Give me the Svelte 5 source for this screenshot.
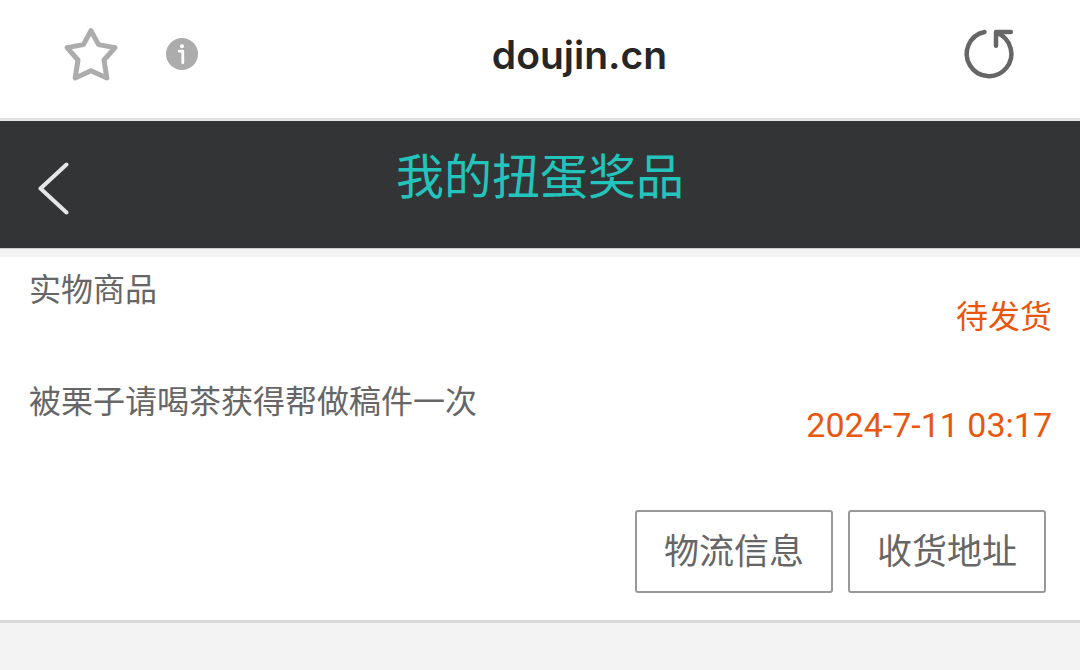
<script>
  const site = 'doujin.cn';
  const prize = {
    kind: '实物商品',
    detail: '被栗子请喝茶获得帮做稿件一次',
    status: '待发货',
    time: '2024-7-11 03:17'
  };
  const actions = ['物流信息', '收货地址'];
</script>

<div class="browser-bar">
  <div class="tools">
    <button class="icon" aria-label="收藏">
      <svg width="56" height="56" viewBox="0 0 56 56" fill="none" stroke="#acacac" stroke-width="5" stroke-linejoin="round">
        <path d="M28 4.6 35.5 18.6 52 21.6 41 34 43.8 52 28 44.8 12.2 52 15 34 4 21.6 20.5 18.6Z" />
      </svg>
    </button>
    <button class="icon" aria-label="网站信息">
      <svg width="32" height="32" viewBox="0 0 32 32">
        <circle cx="16" cy="16" r="16" fill="#acacac" />
        <circle cx="16" cy="8.3" r="2" fill="#fff" />
        <path d="M13.2 13.2H16.8V24.8" fill="none" stroke="#fff" stroke-width="2.8" stroke-linecap="round" stroke-linejoin="round" />
      </svg>
    </button>
  </div>
  <div class="site">{site}</div>
  <button class="icon" aria-label="刷新">
    <svg width="56" height="56" viewBox="0 0 56 56" fill="none" stroke="#666" stroke-width="4.5" stroke-linecap="round" stroke-linejoin="round">
      <path d="M23.5 6A22.3 22.3 0 1 0 36 7" />
      <path d="M35 19.8V6H49.8" />
    </svg>
  </button>
</div>

<header>
  <a class="back" href="#back" aria-label="返回">
    <svg width="32" height="54" viewBox="0 0 32 54" fill="none" stroke="#e6e6e6" stroke-width="4" stroke-linecap="round" stroke-linejoin="round">
      <path d="M29.5 2.5 3.5 26.5 29.5 50.5" />
    </svg>
  </a>
  <h1>我的扭蛋奖品</h1>
</header>

<main>
  <article>
    <div class="summary">
      <div class="info">
        <p>{prize.kind}</p>
        <p>{prize.detail}</p>
      </div>
      <div class="state">
        <p>{prize.status}</p>
        <time>{prize.time}</time>
      </div>
    </div>
    <div class="actions">
      {#each actions as action}
        <button>{action}</button>
      {/each}
    </div>
  </article>
</main>

<style>
  :global(body) {
    margin: 0;
    background: #f3f3f3;
    font-family: Roboto, "Noto Sans CJK SC", sans-serif;
  }

  button {
    font: inherit;
    cursor: pointer;
  }

  p,
  h1 {
    margin: 0;
    font-weight: 400;
  }

  svg {
    display: block;
  }

  .browser-bar {
    display: flex;
    justify-content: space-between;
    align-items: center;
    height: 108px;
    padding: 0 63px 10px;
    background: #fff;
    border-bottom: 3px solid #e4e4e4;
  }

  .tools {
    display: flex;
    align-items: center;
    gap: 47px;
  }

  .icon {
    padding: 0;
    border: 0;
    background: none;
  }

  .site {
    padding-top: 2px;
    color: #262626;
    font-family: Inter, sans-serif;
    font-size: 39px;
    font-weight: 600;
    line-height: 56px;
  }

  header {
    display: grid;
    grid-template-columns: 1fr auto 1fr;
    padding: 21px 37px 34px;
    background: #333436;
    border-bottom: 1px solid #ccc;
  }

  .back {
    justify-self: start;
    padding-top: 20px;
    height: 52px;
  }

  h1 {
    color: #22c4bc;
    font-size: 48px;
    line-height: 72px;
  }

  article {
    margin-top: 8px;
    padding-bottom: 27px;
    background: #fff;
    border-bottom: 3px solid #d9d9d9;
    box-shadow: 0 1px 1px #e4e4e4;
  }

  .summary {
    display: flex;
    justify-content: space-between;
    padding: 9px 28px 0 29px;
    font-size: 32px;
    line-height: 48px;
  }

  .info {
    display: grid;
    align-content: start;
    gap: 64px;
    color: #666;
  }

  .state {
    display: grid;
    justify-items: end;
    gap: 60px;
    padding-top: 27px;
    color: #e9560f;
  }

  time {
    font-size: 34px;
  }

  .actions {
    display: flex;
    justify-content: flex-end;
    gap: 15px;
    padding: 61px 34px 0;
  }

  .actions button {
    padding: 16px 27px 14px;
    border: 2px solid #999;
    border-radius: 3px;
    background: #fff;
    color: #666;
    font-size: 35px;
    line-height: 49px;
  }
</style>
